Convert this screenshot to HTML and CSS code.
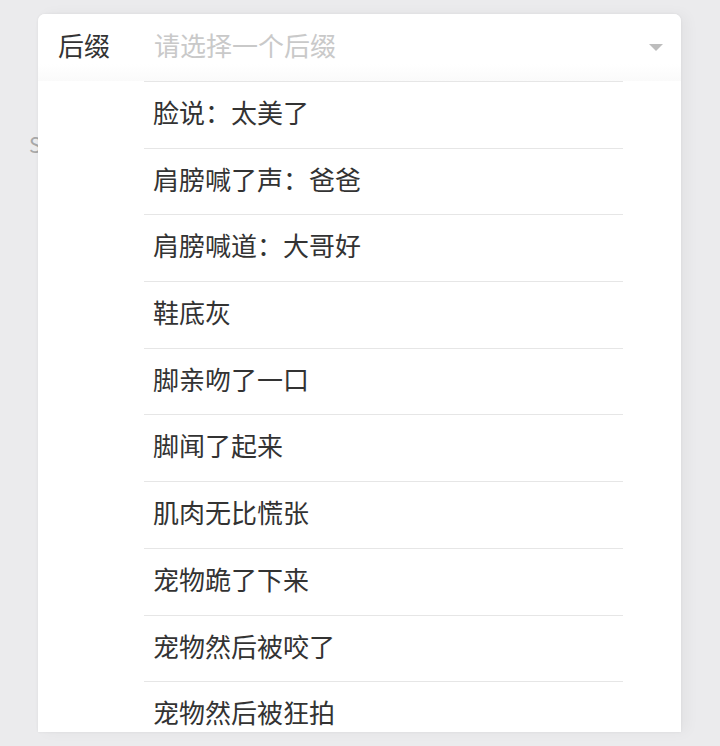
FILE: index.html
```html
<html lang="zh-CN">

<head>
    <meta charset="UTF-8">
    <title>后缀</title>
    <link rel="stylesheet" href="styles.css">
</head>

<body>
    <div id="page">
        <div class="behind">S</div>
        <div id="picker">
            <div class="head">
                <span class="label">后缀</span>
                <span class="placeholder">请选择一个后缀</span>
                <span class="arrow"></span>
            </div>
            <ul class="options">
                <li>脸说：太美了</li>
                <li>肩膀喊了声：爸爸</li>
                <li>肩膀喊道：大哥好</li>
                <li>鞋底灰</li>
                <li>脚亲吻了一口</li>
                <li>脚闻了起来</li>
                <li>肌肉无比慌张</li>
                <li>宠物跪了下来</li>
                <li>宠物然后被咬了</li>
                <li>宠物然后被狂拍</li>
            </ul>
        </div>
    </div>
</body>

</html>
```

FILE: styles.css
```css
html,
body {
    margin: 0px;
    padding: 0px;
    background: #ebebed;
    font-family: "Noto Sans CJK SC", "Noto Sans", sans-serif;
}

#page {
    position: relative;
    width: 720px;
    height: 746px;
    overflow: hidden;
}

.behind {
    position: absolute;
    left: 29px;
    top: 129px;
    font-size: 21px;
    color: #a8a8a8;
}

#picker {
    position: relative;
    margin: 14px 0 0 38px;
    width: 643px;
    height: 718px;
    background: #fff;
    border-radius: 7px 7px 0 0;
    overflow: hidden;
    box-shadow: 0 0 3px rgba(0, 0, 0, 0.06), 6px 0 14px rgba(0, 0, 0, 0.04);
}

.head {
    display: flex;
    align-items: center;
    height: 67px;
    padding: 0 17px 0 20px;
    background: linear-gradient(#fff 75%, #fafafa);
}

.label,
.placeholder {
    font-size: 26px;
    line-height: 61px;
    padding-bottom: 6px;
}

.label {
    width: 96px;
    color: #333;
}

.placeholder {
    flex: 1;
    color: #c9c9c9;
}

.arrow {
    width: 0;
    height: 0;
    border-left: 7px solid transparent;
    border-right: 7px solid transparent;
    border-top: 7px solid #bdbdbd;
    margin-right: 1px;
}

.options {
    margin: 0 0 0 106px;
    padding: 0px;
    width: 479px;
    list-style: none;
}

.options li {
    height: 65.7px;
    line-height: 60px;
    padding-left: 9px;
    border-top: 1px solid #e6e6e6;
    font-size: 26px;
    color: #333;
}
```
